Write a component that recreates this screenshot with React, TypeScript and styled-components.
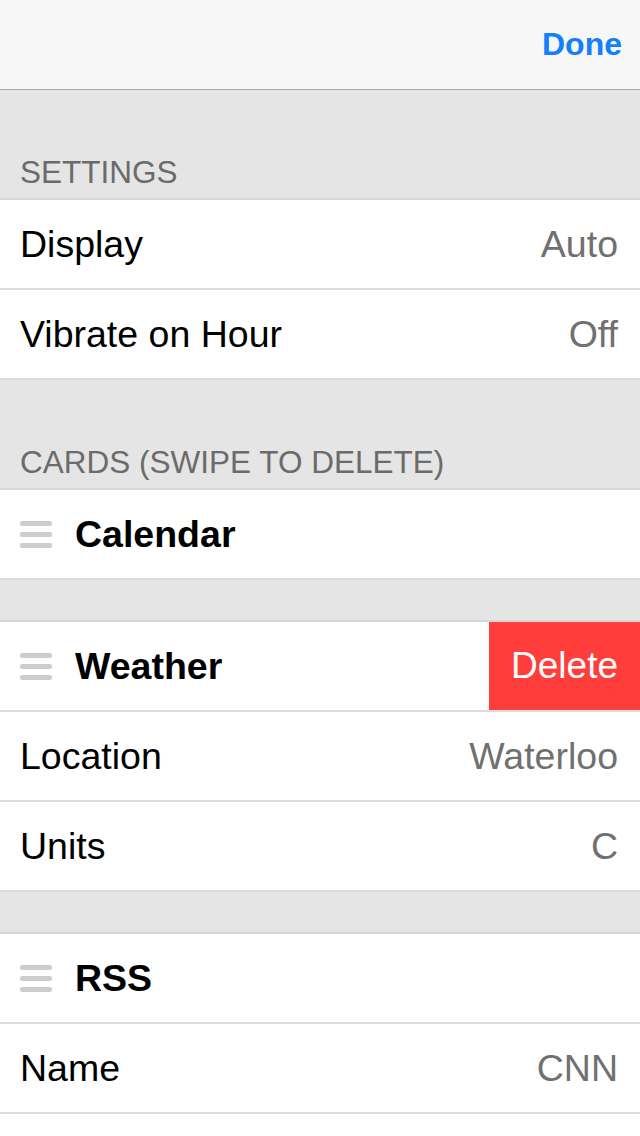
import React from "react";
import styled, { createGlobalStyle } from "styled-components";

const Global = createGlobalStyle`
  html, body {
    margin: 0;
    padding: 0;
    background: #ffffff;
  }
  body {
    font-family: "Liberation Sans", Arial, Helvetica, sans-serif;
    -webkit-font-smoothing: antialiased;
  }
`;

const Page = styled.div`
  width: 640px;
  display: flex;
  flex-direction: column;
`;

const TopBar = styled.header`
  box-sizing: border-box;
  height: 90px;
  display: flex;
  align-items: center;
  justify-content: flex-end;
  padding: 0 18px 0 0;
  background: #f7f7f7;
  border-bottom: 1px solid #a6a6a6;
`;

const DoneButton = styled.button`
  border: 0;
  background: none;
  padding: 0;
  font-family: inherit;
  font-size: 32px;
  font-weight: 700;
  color: #147efb;
  cursor: pointer;
`;

const SectionHeader = styled.div`
  box-sizing: border-box;
  height: 110px;
  display: flex;
  align-items: flex-end;
  padding: 0 20px 7px;
  background: #e5e5e5;
  border-bottom: 2px solid #d8d8d8;
  color: #6b6b6b;
  font-size: 31.5px;
  text-transform: uppercase;
`;

const Gap = styled.div`
  height: 40px;
  background: #e5e5e5;
  border-bottom: 2px solid #d8d8d8;
`;

const Row = styled.div`
  height: 88px;
  display: flex;
  align-items: center;
  padding-left: 20px;
  background: #ffffff;
  border-bottom: 2px solid #dcdcdc;
  font-size: 37.5px;
  color: #000000;
`;

const Label = styled.span<{ $bold?: boolean }>`
  flex: 1;
  font-weight: ${(p) => (p.$bold ? 700 : 400)};
  white-space: nowrap;
`;

const Value = styled.span`
  color: #707070;
  padding-right: 22px;
  white-space: nowrap;
`;

const Handle = styled.span`
  width: 32px;
  display: flex;
  flex-direction: column;
  gap: 6px;
  margin-right: 23px;
  & > i {
    display: block;
    height: 5px;
    border-radius: 2px;
    background: #cdcdcd;
  }
`;

const DeleteButton = styled.button`
  align-self: stretch;
  border: 0;
  margin: 0;
  padding: 0 22px;
  background: #ff3d3a;
  color: #ffffff;
  font-family: inherit;
  font-size: 37px;
  cursor: pointer;
`;

const Filler = styled.div`
  height: 40px;
  background: #ffffff;
`;

function DragHandle() {
  return (
    <Handle aria-hidden>
      <i />
      <i />
      <i />
    </Handle>
  );
}

function SettingRow({ label, value }: { label: string; value: string }) {
  return (
    <Row>
      <Label>{label}</Label>
      <Value>{value}</Value>
    </Row>
  );
}

function CardRow({ title, deletable }: { title: string; deletable?: boolean }) {
  return (
    <Row>
      <DragHandle />
      <Label $bold>{title}</Label>
      {deletable && <DeleteButton>Delete</DeleteButton>}
    </Row>
  );
}

export default function App() {
  return (
    <Page>
      <Global />
      <TopBar>
        <DoneButton>Done</DoneButton>
      </TopBar>
      <SectionHeader>Settings</SectionHeader>
      <SettingRow label="Display" value="Auto" />
      <SettingRow label="Vibrate on Hour" value="Off" />
      <SectionHeader>Cards (Swipe to Delete)</SectionHeader>
      <CardRow title="Calendar" />
      <Gap />
      <CardRow title="Weather" deletable />
      <SettingRow label="Location" value="Waterloo" />
      <SettingRow label="Units" value="C" />
      <Gap />
      <CardRow title="RSS" />
      <SettingRow label="Name" value="CNN" />
      <Filler />
    </Page>
  );
}
